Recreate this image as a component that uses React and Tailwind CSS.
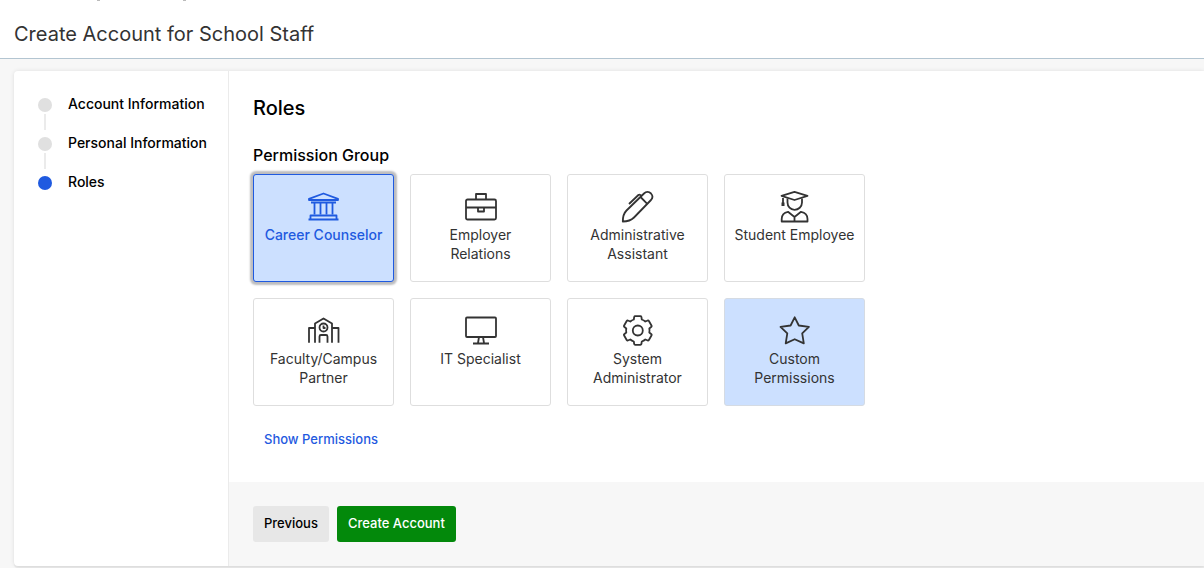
import { useState } from 'react';

const icons = {
  bank: (
    <>
      <path d="M16 2.5 L1.5 7.8 V9 H30.5 V7.8 Z" />
      <path d="M3.5 11.5 H28.5 M7 12 V23.5 M13 12 V23.5 M19 12 V23.5 M25 12 V23.5" />
      <path d="M1 28.5 H31 M3 28 V24.5 H29 V28" />
    </>
  ),
  briefcase: (
    <>
      <rect x="1.5" y="8.5" width="30" height="20" rx="1.5" />
      <path d="M11.5 8 V3 H21.5 V8 M1.5 16.5 H31.5 M13.5 16.5 V20.5 H19.5 V16.5" />
    </>
  ),
  pen: (
    <>
      <path d="M1.3 30.5 C1.3 26 2 22.5 5 19.5 L22.5 2.5 C24.5 0.5 27.5 0.5 29.5 2.5 C31.3 4.5 31.3 7 29.5 9 L12.5 26.5 C9.5 29.5 6 30.5 1.3 30.5 Z" />
      <path d="M19 6 L25.5 12.7 M20 5 L18.8 4 C18.2 3.4 17.5 3.4 16.9 4 L7.5 13" />
    </>
  ),
  graduate: (
    <>
      <path d="M16 0.8 L3 4.8 L16 9 L29 4.8 Z M4.5 5.5 V12" />
      <path d="M4.5 11.5 V15" strokeWidth="3" />
      <path d="M9 7.5 V11.5 C9 15.7 12 18.8 16 18.8 C20 18.8 23.5 15.7 23.5 11.5 V7.5" />
      <path d="M9.5 20.8 C5.5 21.5 3.2 24 3.2 28 V30.5 H29 V28 C29 24 26.5 21.5 22.5 20.8 L16 26 L9.5 20.8 Z M16 26 V30.5" />
    </>
  ),
  campus: (
    <>
      <path d="M1.5 27.8 V13 H7.3 M7.5 27.8 V8.5 L16 3.5 L24.5 8.5 V27.8 M24.7 13 H31 V27.8" />
      <circle cx="16" cy="12.5" r="4" />
      <path d="M16 10.5 V13 H18 M12 27.8 V21.5 C12 20.5 12.8 20 13.5 20 H18.5 C19.3 20 20 20.5 20 21.5 V27.8" />
    </>
  ),
  monitor: (
    <>
      <rect x="1.5" y="2.5" width="30" height="19.5" rx="1" />
      <path d="M8.5 28.5 H24.5 M14.5 22 L13.5 28 M18.5 22 L19.5 28" />
    </>
  ),
  gear: (
    <g transform="translate(16.3 15.5)">
      <path d="M-4 -11 L-3.6 -13.6 Q-3.4 -14.3 -2.6 -14.3 H2.6 Q3.4 -14.3 3.6 -13.6 L4 -11 Q6 -10.4 7.5 -9 L10 -10 Q10.7 -10.1 11.1 -9.5 L13.8 -4.8 Q14.1 -4.2 13.6 -3.7 L11.5 -2 Q12 0 11.5 2 L13.6 3.7 Q14.1 4.2 13.8 4.8 L11.1 9.5 Q10.7 10.1 10 10 L7.5 9 Q6 10.4 4 11 L3.6 13.6 Q3.4 14.3 2.6 14.3 H-2.6 Q-3.4 14.3 -3.6 13.6 L-4 11 Q-6 10.4 -7.5 9 L-10 10 Q-10.7 10.1 -11.1 9.5 L-13.8 4.8 Q-14.1 4.2 -13.6 3.7 L-11.5 2 Q-12 0 -11.5 -2 L-13.6 -3.7 Q-14.1 -4.2 -13.8 -4.8 L-11.1 -9.5 Q-10.7 -10.1 -10 -10 L-7.5 -9 Q-6 -10.4 -4 -11 Z" />
      <circle r="5" />
    </g>
  ),
  star: (
    <path d="M16.2 2.3 L20.3 10.5 L30.4 11.8 L23.7 18.4 L25.3 28.4 L16.2 24.2 L7.2 28.4 L8.8 18.4 L2 11.8 L12.1 10.5 Z" />
  ),
};

const groups = [
  { name: 'Career Counselor', icon: 'bank' },
  { name: 'Employer Relations', icon: 'briefcase' },
  { name: 'Administrative Assistant', icon: 'pen' },
  { name: 'Student Employee', icon: 'graduate' },
  { name: 'Faculty/Campus Partner', icon: 'campus' },
  { name: 'IT Specialist', icon: 'monitor' },
  { name: 'System Administrator', icon: 'gear' },
  { name: 'Custom Permissions', icon: 'star', highlighted: true },
];

const steps = ['Account Information', 'Personal Information', 'Roles'];

function GroupCard({ group, selected, onSelect }) {
  let colors = 'border-[#dedede] bg-white text-[#333]';
  if (group.highlighted) colors = 'border-[#d5dbe3] bg-[#cce0ff] text-[#333]';
  if (selected) colors = 'border-[#1f5ae0] bg-[#cce0ff] text-[#1f5ae0] font-medium shadow-[0_0_2px_3px_#bdbdbf]';

  return (
    <button
      type="button"
      aria-pressed={selected}
      onClick={onSelect}
      className={`flex h-[108px] flex-col items-center rounded-[3px] border px-2 pt-4 text-sm leading-[19px] outline-none ${colors}`}
    >
      <svg
        viewBox="0.5 0 32 32"
        className="mb-0.5 size-8 shrink-0 overflow-visible"
        fill="none"
        stroke="currentColor"
        strokeWidth="1.8"
        strokeLinejoin="round"
        aria-hidden="true"
      >
        {icons[group.icon]}
      </svg>
      {group.name}
    </button>
  );
}

function Steps({ current }) {
  return (
    <ol className="w-[215px] shrink-0 border-r border-[#ebebeb] px-6 pt-[23px]">
      {steps.map((step, i) => (
        <li key={step} className="flex gap-4">
          <div className="flex w-3.5 flex-col items-center pt-1">
            <span className={`size-3.5 rounded-full ${i === current ? 'bg-[#1f5ae0]' : 'bg-[#e0e0e0]'}`} />
            {i < steps.length - 1 && <span className="mt-[2px] mb-[3px] h-4 w-0.5 bg-[#ebebeb]" />}
          </div>
          <span className="text-sm leading-5 font-medium whitespace-nowrap text-black">{step}</span>
        </li>
      ))}
    </ol>
  );
}

export default function App() {
  const [selected, setSelected] = useState('Career Counselor');

  return (
    <div className="min-h-screen overflow-x-hidden bg-[#f7f7f7] font-['Inter',sans-serif]">
      <header className="border-b border-[#b3c5d1] bg-white">
        <div className="flex h-px gap-[83px] pl-[97px]" aria-hidden="true">
          <span className="w-[3px] bg-[#bbb]" />
          <span className="w-[3px] bg-[#bbb]" />
        </div>
        <h1 className="px-3.5 pt-[19px] pb-[10px] text-xl leading-7 text-[#333]">
          Create Account for School Staff
        </h1>
      </header>

      <main className="mt-3 ml-3.5 flex overflow-hidden rounded-l-[4px] bg-white shadow-[0_0_4px_rgba(0,0,0,0.1),0_2px_1px_rgba(0,0,0,0.06)]">
        <Steps current={2} />

        <div className="min-w-0 grow">
          <section className="px-6 pt-[23px] pb-6">
            <h2 className="text-xl leading-7 font-medium text-black">Roles</h2>
            <h3 className="mt-[21px] text-base leading-6 font-medium text-black">Permission Group</h3>
            <div className="mt-[7px] grid grid-cols-[repeat(4,141px)] gap-4">
              {groups.map((group) => (
                <GroupCard
                  key={group.name}
                  group={group}
                  selected={selected === group.name}
                  onSelect={() => setSelected(group.name)}
                />
              ))}
            </div>
            <button type="button" className="mt-4 h-9 px-[11px] text-[13px] font-medium text-[#1f5ae0]">
              Show Permissions
            </button>
          </section>

          <footer className="flex gap-2 bg-[#f7f7f7] p-6">
            <button type="button" className="h-9 rounded-[3px] bg-[#e7e7e7] px-[11px] text-[13px] font-medium text-black">
              Previous
            </button>
            <button type="button" className="h-9 rounded-[3px] bg-[#03890b] px-[11px] text-[13px] font-medium text-white">
              Create Account
            </button>
          </footer>
        </div>
      </main>
    </div>
  );
}
